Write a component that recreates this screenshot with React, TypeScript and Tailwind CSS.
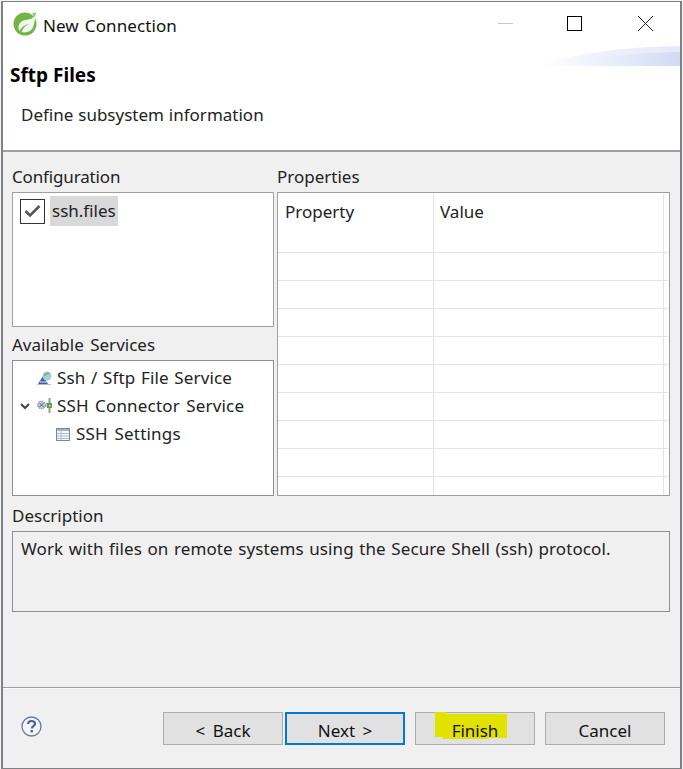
import React from "react";

const font = { fontFamily: '"Noto Sans", "Noto Sans CJK KR", sans-serif' };

function SpringLogo() {
  return (
    <svg width="25" height="25" viewBox="0 0 25 25" className="shrink-0">
      <circle cx="12" cy="13" r="11.500" fill="#72b544" />
      <path d="M22 4C20 7.500 17 8.500 12.500 9 8.500 9.500 5.500 12.500 5.500 16.500c0 1.200.3 2.400 1 3.500 1.500-3.500 5-6 10.500-7.500-4.500 2-7 4.500-8.500 8.500 4 1.200 9.500-.2 11.500-4.500 1.300-3.500 2.300-7.500 2-12.500z" fill="#fff" opacity="0.9" />
      <path d="M19 2.500l4-1-1 5z" fill="#8cc465" />
    </svg>
  );
}

function HelpIcon() {
  return (
    <svg width="21" height="21" viewBox="0 0 21 21">
      <circle cx="10.500" cy="10.500" r="9.500" fill="#f4f5f8" stroke="#6a7a9c" strokeWidth="1.300" />
      <path d="M7 8c.2-2 1.600-3 3.500-3 2 0 3.500 1.100 3.500 2.800 0 2.400-3.200 2.300-3.200 4.700" fill="none" stroke="#4f628b" strokeWidth="2.200" />
      <rect x="9.600" y="14" width="2.300" height="2.400" fill="#4f628b" />
    </svg>
  );
}

function ServiceIcon() {
  return (
    <svg width="15" height="15" viewBox="0 0 15 15">
      <path d="M1 13 L6 5 L11 13 Z" fill="#3f5da8" />
      <path d="M3 11 L10 11" stroke="#dfe6f5" strokeWidth="1" />
      <circle cx="10" cy="5" r="4.500" fill="#a9cbe6" />
      <path d="M7 3.500c1-1.500 4-2.500 5.500-1.500 0 1-1.500 1.500-2.500 1.500S9 5.500 7.500 5.500z" fill="#7fb35a" />
      <path d="M0 13.500h14" stroke="#b8b8c8" strokeWidth="1" />
    </svg>
  );
}

function ConnectorIcon() {
  return (
    <svg width="16" height="16" viewBox="0 0 16 16">
      <circle cx="4.500" cy="7" r="3.800" fill="#c4cde2" stroke="#5b6e9c" strokeWidth="1" strokeDasharray="1.500 1" />
      <path d="M2.500 5l4 4M6.500 5l-4 4" stroke="#52648f" strokeWidth="1" />
      <path d="M8 6h3M8 8h3" stroke="#9a9a9a" strokeWidth="1" />
      <rect x="11.500" y="0" width="2" height="15" fill="#9a9a9a" />
      <rect x="10" y="5" width="5" height="5" fill="#5f9f4a" />
      <rect x="12" y="7" width="1.500" height="1.500" fill="#d6ecc9" />
    </svg>
  );
}

function TableIcon() {
  return (
    <svg width="14" height="13" viewBox="0 0 14 13">
      <rect x="0.500" y="0.500" width="13" height="12" fill="#f5f7fa" stroke="#7c8894" />
      <rect x="1" y="1" width="12" height="2" fill="#aab4c0" />
      <path d="M1 5.500h12M1 8h12M1 10.500h12M5 3v9" stroke="#b3bcc8" strokeWidth="1" />
    </svg>
  );
}

function Btn({ label, primary, mark, wide }: { label: string; primary?: boolean; mark?: boolean; wide?: boolean }) {
  return (
    <div
      className={
        "relative flex h-[33px] w-[120px] items-center justify-center bg-[#e1e1e1] pt-[5px] text-[17px] text-[#111] " +
        (primary ? "border-2 border-[#0078d7] " : "border border-[#adadad] ") +
        (wide ? "[word-spacing:3px]" : "")
      }
    >
      {mark && (
        <svg width="72" height="27" viewBox="0 0 72 27" className="absolute left-[19px] top-[-1px]">
          <path d="M0 0H12V2H72V26H53V27H8V25H0Z" fill="#e2e200" />
        </svg>
      )}
      <span className="relative">{label}</span>
    </div>
  );
}

const rows = [0, 1, 2, 3, 4, 5, 6, 7, 8];

export default function App() {
  return (
    <div className="h-[769px] w-[683px] overflow-hidden bg-[#f4f4f4] pl-px pt-px" style={font}>
      <div className="flex h-[768px] w-[681px] flex-col border-y border-r-2 border-l-2 border-[#7f7f86] bg-[#f0f0f0]">
        <div className="relative h-[150px] shrink-0 border-b-2 border-[#a0a0a0] bg-white">
          <svg width="140" height="20" viewBox="0 0 140 20" className="absolute right-0 top-[44px]">
            <defs>
              <linearGradient id="sw" x1="0" x2="1" y1="0" y2="0">
                <stop offset="0" stopColor="#ffffff" />
                <stop offset="0.4" stopColor="#eef2fb" />
                <stop offset="1" stopColor="#e4eafa" />
              </linearGradient>
              <linearGradient id="sw2" x1="0" x2="1" y1="0" y2="0">
                <stop offset="0" stopColor="#ffffff" />
                <stop offset="0.5" stopColor="#e9eefa" />
                <stop offset="1" stopColor="#d0daf3" />
              </linearGradient>
            </defs>
            <path d="M0 20C30 8 80 1 140 0V20Z" fill="url(#sw)" />
            <path d="M0 20C40 12 90 7 140 6V20Z" fill="url(#sw2)" />
          </svg>

          <div className="flex h-[45px] items-center pl-[10px]">
            <span className="mb-[2px] flex">
              <SpringLogo />
            </span>
            <span className="ml-[5px] pt-[3px] text-[17px] text-[#111] tracking-[0.1px] [word-spacing:1.500px]">New Connection</span>
            <div className="mb-[3px] ml-auto flex items-center">
              <span className="mr-[54px] h-px w-[15px] bg-[#c8c8c8]" />
              <span className="mr-[56px] h-[15px] w-[15px] border border-black" />
              <svg width="15" height="15" viewBox="0 0 15 15" className="mr-[27px]">
                <path d="M0 0l15 15M15 0l-15 15" stroke="#222" strokeWidth="1" />
              </svg>
            </div>
          </div>

          <div className="pl-[7px] pt-[13px] text-[19px] font-bold leading-[30px] text-black">Sftp Files</div>
          <div className="pl-[18px] pt-[10px] text-[17px] leading-[30px] text-[#222] [word-spacing:0.5px]">
            Define subsystem information
          </div>
        </div>

        <div className="flex flex-col pl-[9px] pr-[10px]">
          <div className="flex gap-[3px]">
            <div className="flex w-[262px] flex-col">
              <div className="h-[40px] pt-[13px] text-[17px] leading-[24px] tracking-[-0.15px] text-[#222]">Configuration</div>
              <div className="h-[135px] border border-[#a0a0a0] bg-white pl-[7px] pt-[3px]">
                <div className="flex items-center">
                  <span className="flex h-[25px] w-[25px] items-center justify-center border border-[#333] bg-white">
                    <svg width="17" height="14" viewBox="0 0 17 14">
                      <path d="M1.500 7l4.500 4.500L15.500 2" fill="none" stroke="#555" strokeWidth="2.500" />
                    </svg>
                  </span>
                  <span className="ml-[5px] flex h-[30px] items-center bg-[#d9d9d9] px-[2px] text-[17px] text-[#222]">ssh.files</span>
                </div>
              </div>
              <div className="h-[33px] pt-[6px] text-[17px] leading-[24px] text-[#222] [word-spacing:2px]">Available Services</div>
              <div className="h-[136px] border border-[#8f8f8f] bg-white pt-[3px] text-[17px] text-[#222]">
                <div className="flex h-[28px] items-center pl-[24px]">
                  <ServiceIcon />
                  <span className="ml-[5px] tracking-[0.15px] [word-spacing:1px]">Ssh / Sftp File Service</span>
                </div>
                <div className="flex h-[28px] items-center pl-[7px]">
                  <svg width="10" height="7" viewBox="0 0 10 7" className="mr-[7px]">
                    <path d="M1 1l4 4 4-4" fill="none" stroke="#444" strokeWidth="2" />
                  </svg>
                  <ConnectorIcon />
                  <span className="ml-[4px] tracking-[0.2px] [word-spacing:1.500px]">SSH Connector Service</span>
                </div>
                <div className="flex h-[28px] items-center pl-[43px]">
                  <TableIcon />
                  <span className="ml-[6px] tracking-[0.2px] [word-spacing:2px]">SSH Settings</span>
                </div>
              </div>
            </div>

            <div className="flex w-[393px] flex-col">
              <div className="h-[40px] pt-[13px] text-[17px] leading-[24px] text-[#222]">Properties</div>
              <div className="relative h-[304px] border border-[#a0a0a0] bg-white">
                <div className="flex h-[59px] text-[17px] text-[#222]">
                  <div className="w-[155px] pl-[7px] pt-[6px]">Property</div>
                  <div className="pl-[7px] pt-[6px]">Value</div>
                </div>
                {rows.map((r) => (
                  <div key={r} className="mr-[1px] h-[28px] border-t border-[#e3e3e3]" />
                ))}
                <div className="absolute bottom-0 left-[155px] top-[1px] w-px bg-[#e3e3e3]" />
                <div className="absolute bottom-0 right-[5px] top-[1px] w-px bg-[#e3e3e3]" />
              </div>
            </div>
          </div>

          <div className="h-[35px] pt-[8px] text-[17px] leading-[24px] text-[#222]">Description</div>
          <div className="h-[81px] border border-[#8f8f8f] bg-[#f0f0f0] pl-[8px] pt-[3px] text-[17px] leading-[28px] tracking-[0.1px] text-[#222] [word-spacing:1px]">
            Work with files on remote systems using the Secure Shell (ssh) protocol.
          </div>
        </div>

        <div className="mt-[75px] flex h-[80px] border-t border-[#a0a0a0]">
          <div className="flex w-full items-start border-t border-[#fafafa] pt-[23px]">
            <div className="ml-[18px] mt-[4px]">
              <HelpIcon />
            </div>
            <div className="ml-[121px] flex gap-[2px]">
              <Btn label="< Back" wide />
              <Btn label="Next >" primary wide />
            </div>
            <div className="ml-[10px] flex gap-[10px]">
              <Btn label="Finish" mark />
              <Btn label="Cancel" />
            </div>
          </div>
        </div>
      </div>
    </div>
  );
}
